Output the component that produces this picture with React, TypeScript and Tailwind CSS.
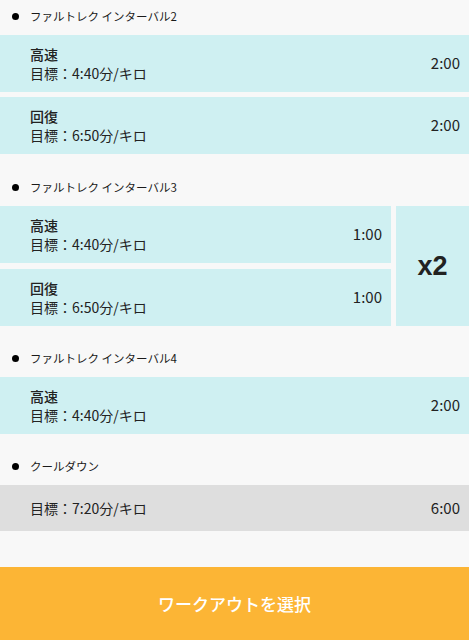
import React from "react";

const font = { fontFamily: '"Noto Sans CJK JP", "Noto Sans", sans-serif' };

function Heading({ text, top }: { text: string; top: string }) {
  return (
    <div className={`flex items-center h-5 pl-[12px] ${top} mb-[9px]`}>
      <span className="w-[7px] h-[7px] rounded-full bg-black mr-[11px]" />
      <span className="text-[11.5px] leading-5 text-[#1a1a1a]">{text}</span>
    </div>
  );
}

function Card({ title, target, time }: { title?: string; target: string; time: string }) {
  return (
    <div className="flex items-center h-[57px] bg-[#cff0f2] pl-[30px] pr-[9px]">
      <div className="flex-1 flex flex-col">
        {title && <span className="text-[14px] leading-[19px] font-medium text-[#222]">{title}</span>}
        <span className="text-[14px] leading-[19px] text-[#222]">{target}</span>
      </div>
      <span className="text-[15px] text-[#222]">{time}</span>
    </div>
  );
}

export default function App() {
  return (
    <div style={font} className="w-[469px] h-[640px] bg-[#f8f8f8] flex flex-col overflow-hidden">
      <div className="flex-1">
        <Heading text="ファルトレク インターバル2" top="mt-[6px]" />
        <div className="flex flex-col gap-[5px]">
          <Card title="高速" target="目標：4:40分/キロ" time="2:00" />
          <Card title="回復" target="目標：6:50分/キロ" time="2:00" />
        </div>
        <Heading text="ファルトレク インターバル3" top="mt-[23px]" />
        <div className="flex gap-[5px]">
          <div className="flex-1 flex flex-col gap-[6px]">
            <Card title="高速" target="目標：4:40分/キロ" time="1:00" />
            <Card title="回復" target="目標：6:50分/キロ" time="1:00" />
          </div>
          <div className="w-[73px] bg-[#cff0f2] flex items-center justify-center">
            <span className="text-[27px] font-bold text-[#222]" style={{ fontFamily: '"Liberation Sans", Arial, sans-serif' }}>x2</span>
          </div>
        </div>
        <Heading text="ファルトレク インターバル4" top="mt-[22px]" />
        <Card title="高速" target="目標：4:40分/キロ" time="2:00" />
        <Heading text="クールダウン" top="mt-[22px]" />
        <div className="flex items-center h-[46px] bg-[#dedede] pl-[30px] pr-[9px]">
          <span className="flex-1 text-[14px] text-[#222]">目標：7:20分/キロ</span>
          <span className="text-[15px] text-[#222]">6:00</span>
        </div>
      </div>
      <button className="h-[73px] w-full bg-[#fcb535] text-white text-[17px] font-medium flex items-center justify-center">
        ワークアウトを選択
      </button>
    </div>
  );
}
